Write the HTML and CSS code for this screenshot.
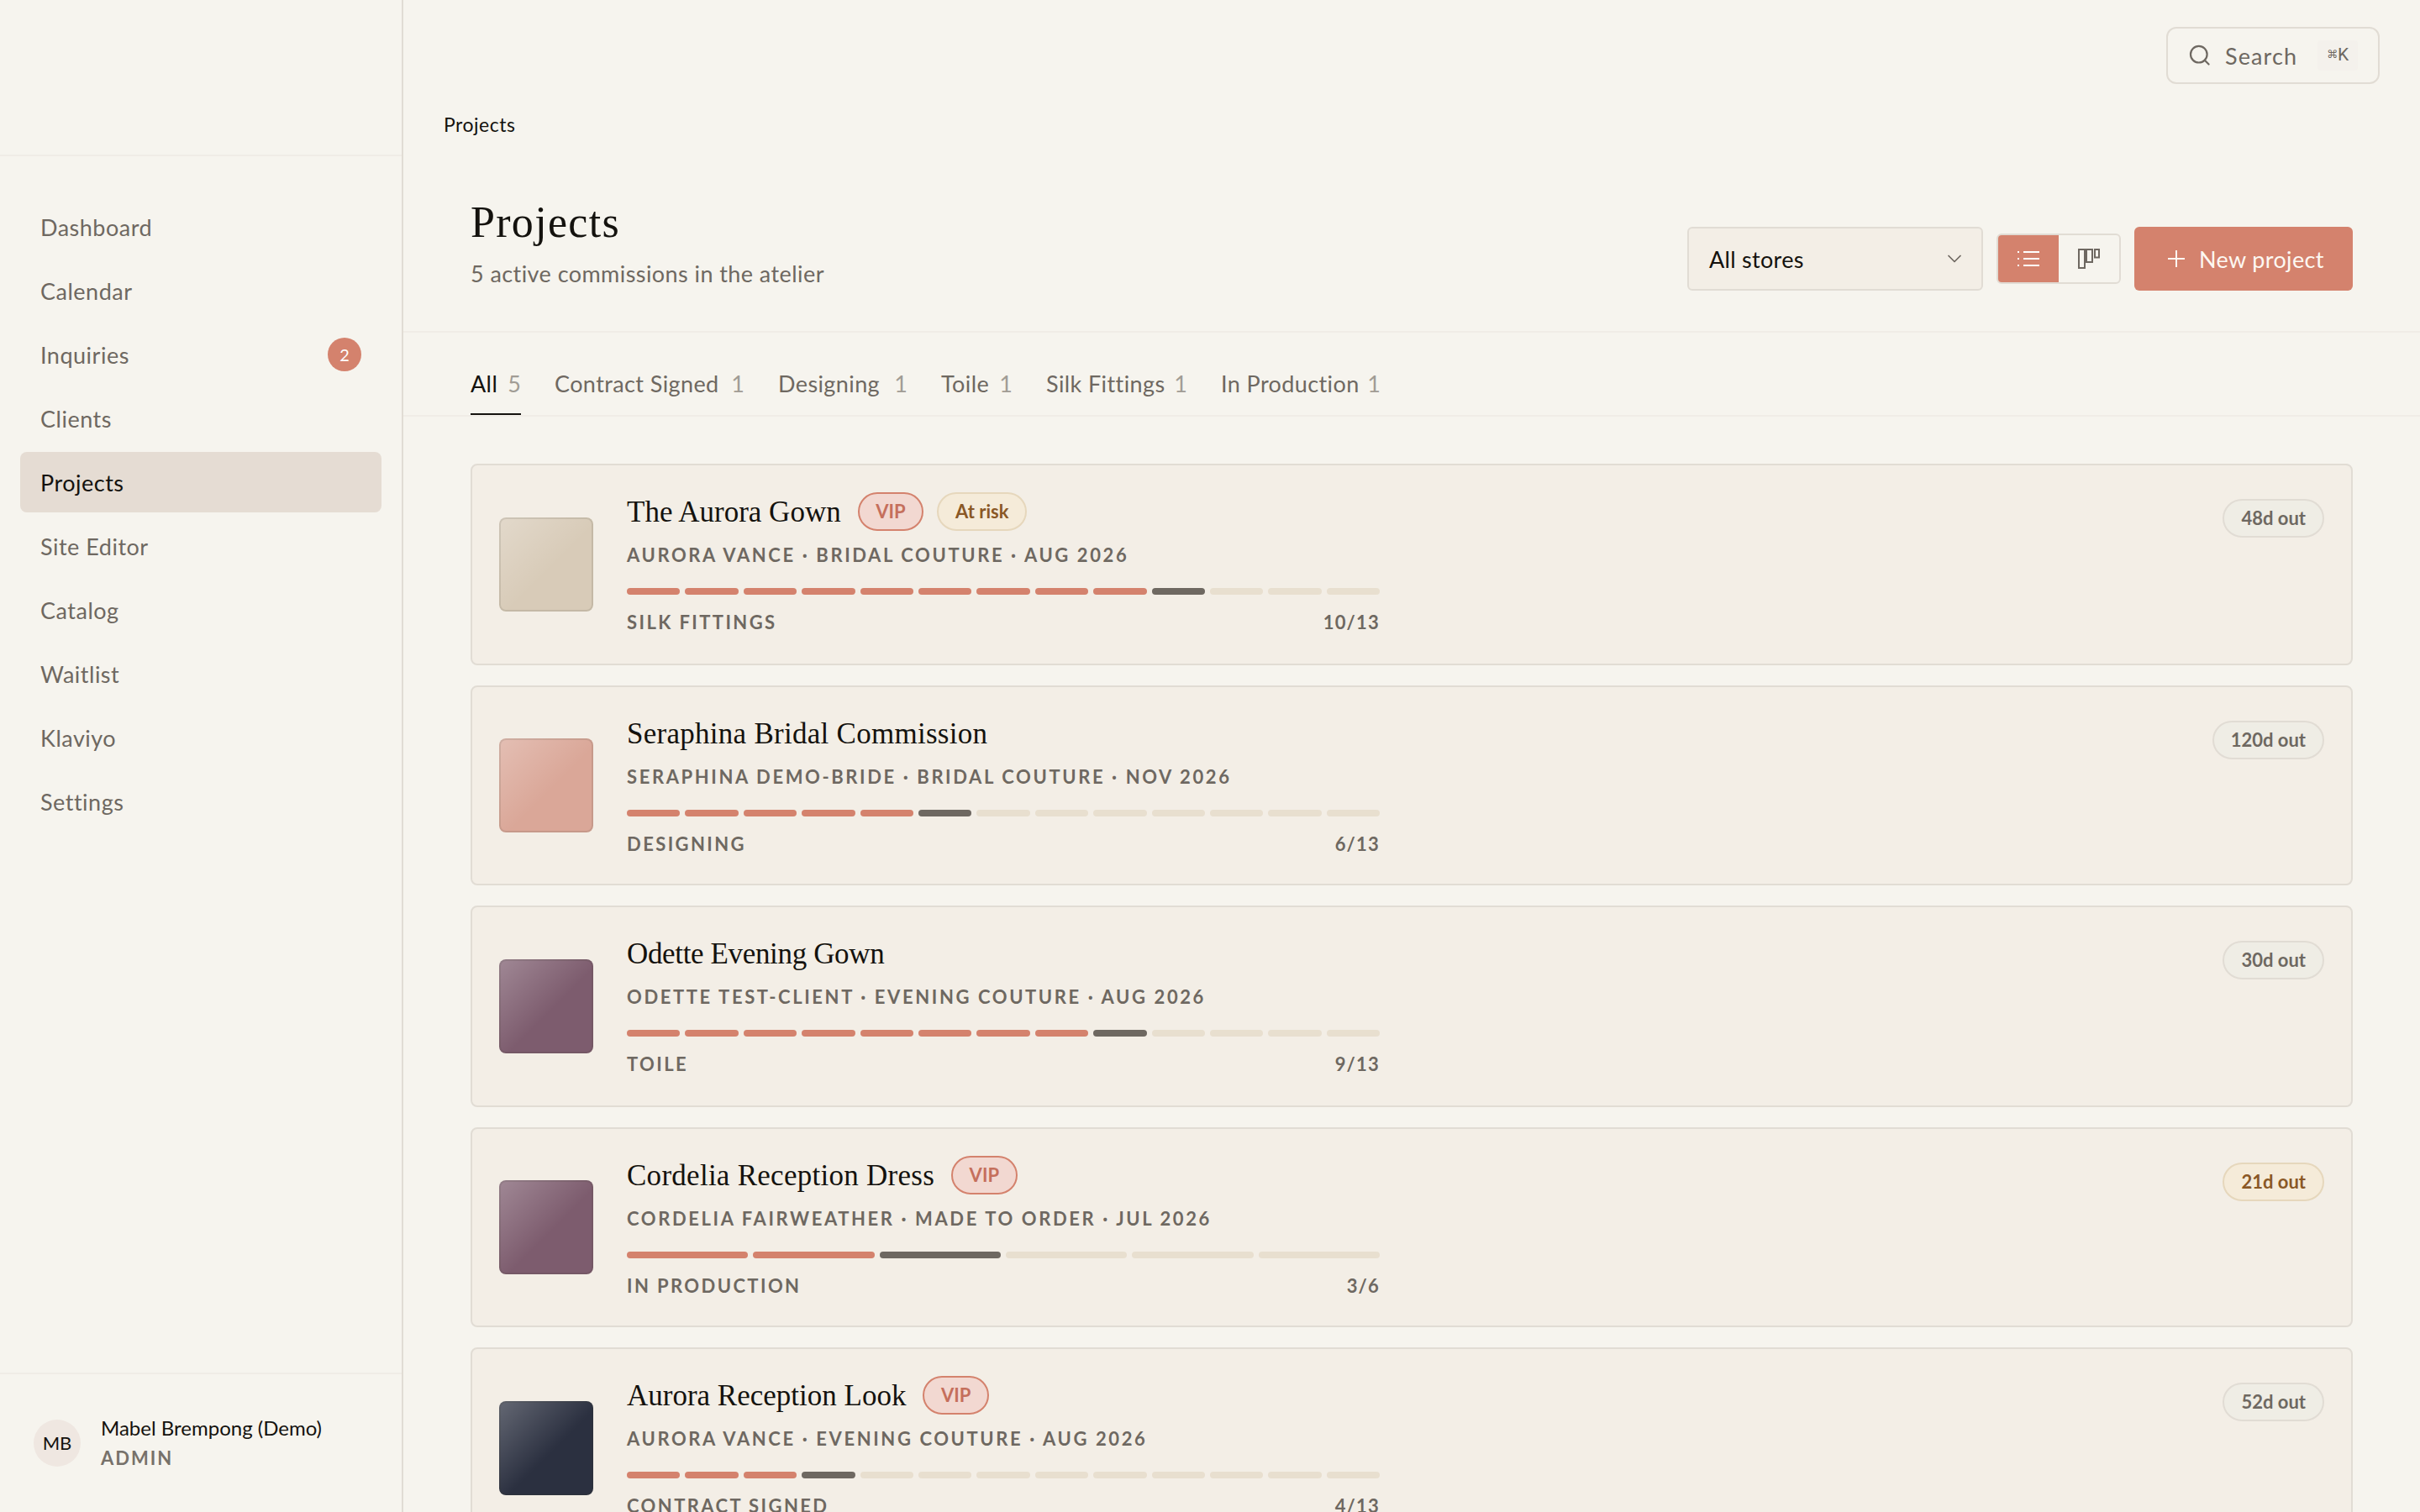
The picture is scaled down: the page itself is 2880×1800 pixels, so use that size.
FILE: index.html
```
<!DOCTYPE html>
<html lang="en">
<head>
  <meta charset="UTF-8" />
  <meta name="viewport" content="width=device-width, initial-scale=1.0"/>
  <title>Projects</title>
  <link rel="stylesheet" href="styles.css">
</head>
<body>
  <aside class="sidebar">
    <div class="brand"></div>
    <nav class="nav">
      <a class="nav-item">Dashboard</a>
      <a class="nav-item">Calendar</a>
      <a class="nav-item">Inquiries <span class="nav-count">2</span></a>
      <a class="nav-item">Clients</a>
      <a class="nav-item active">Projects</a>
      <a class="nav-item">Site Editor</a>
      <a class="nav-item">Catalog</a>
      <a class="nav-item">Waitlist</a>
      <a class="nav-item">Klaviyo</a>
      <a class="nav-item">Settings</a>
    </nav>
    <div class="user">
      <div class="avatar">MB</div>
      <div class="user-info">
        <div class="user-name">Mabel Brempong (Demo)</div>
        <div class="user-role">ADMIN</div>
      </div>
    </div>
  </aside>

  <main class="main">
    <div class="topbar">
      <button type="button" class="search">
        <svg width="28" height="28" viewBox="0 0 28 28" fill="none" stroke="currentColor" stroke-width="2.2" stroke-linecap="round">
          <circle cx="12.8" cy="12.7" r="9.8"/>
          <path d="M19.8 19.7l4.8 4.8"/>
        </svg>
        <span class="search-label">Search</span>
        <kbd><span class="cmd">⌘</span>K</kbd>
      </button>
    </div>
    <div class="breadcrumb">Projects</div>

    <header class="page-header">
      <div>
        <h1>Projects</h1>
        <p class="lead">5 active commissions in the atelier</p>
      </div>
      <div class="controls">
        <div class="select">
          All stores
          <svg width="28" height="28" viewBox="0 0 24 24" fill="none" stroke="currentColor" stroke-width="1.5" stroke-linecap="round" stroke-linejoin="round">
            <path d="M6 9l6 6 6-6"/>
          </svg>
        </div>
        <div class="toggle">
          <button type="button" class="on" aria-label="List view">
            <svg width="28" height="28" viewBox="0 0 28 28" fill="none" stroke="currentColor" stroke-width="2">
              <path d="M8 6h19M8 14h19M8 22h19M1 6h2M1 14h2M1 22h2"/>
            </svg>
          </button>
          <button type="button" aria-label="Board view">
            <svg width="28" height="28" viewBox="0 0 28 28" fill="none" stroke="currentColor" stroke-width="2">
              <rect x="2" y="3" width="7" height="22"/>
              <rect x="11" y="3" width="7" height="15"/>
              <rect x="21" y="3" width="5" height="9.5"/>
            </svg>
          </button>
        </div>
        <button type="button" class="new-btn">
          <svg width="28" height="28" viewBox="0 0 28 28" fill="none" stroke="currentColor" stroke-width="2">
            <path d="M4 14h20M14 4v20"/>
          </svg>
          New project
        </button>
      </div>
    </header>

    <nav class="tabs">
      <a class="tab active">All <span>5</span></a>
      <a class="tab">Contract Signed <span>1</span></a>
      <a class="tab">Designing <span>1</span></a>
      <a class="tab">Toile <span>1</span></a>
      <a class="tab">Silk Fittings <span>1</span></a>
      <a class="tab">In Production <span>1</span></a>
    </nav>

    <section class="list">
      <article class="card">
        <div class="swatch cream"></div>
        <div class="card-body">
          <div class="title-row">
            <h2>The Aurora Gown</h2>
            <span class="badge vip">VIP</span>
            <span class="badge warn">At risk</span>
          </div>
          <div class="meta">AURORA VANCE · BRIDAL COUTURE · AUG 2026</div>
          <div class="progress" data-step="10" data-total="13"></div>
          <div class="stage"><span>SILK FITTINGS</span><span class="step">10/13</span></div>
        </div>
        <span class="badge due">48d out</span>
      </article>

      <article class="card">
        <div class="swatch blush"></div>
        <div class="card-body">
          <div class="title-row">
            <h2 class="loose">Seraphina Bridal Commission</h2>
          </div>
          <div class="meta">SERAPHINA DEMO-BRIDE · BRIDAL COUTURE · NOV 2026</div>
          <div class="progress" data-step="6" data-total="13"></div>
          <div class="stage"><span>DESIGNING</span><span class="step">6/13</span></div>
        </div>
        <span class="badge due">120d out</span>
      </article>

      <article class="card">
        <div class="swatch plum"></div>
        <div class="card-body">
          <div class="title-row">
            <h2 class="tight">Odette Evening Gown</h2>
          </div>
          <div class="meta">ODETTE TEST-CLIENT · EVENING COUTURE · AUG 2026</div>
          <div class="progress" data-step="9" data-total="13"></div>
          <div class="stage"><span>TOILE</span><span class="step">9/13</span></div>
        </div>
        <span class="badge due">30d out</span>
      </article>

      <article class="card">
        <div class="swatch plum"></div>
        <div class="card-body">
          <div class="title-row">
            <h2 class="loose">Cordelia Reception Dress</h2>
            <span class="badge vip">VIP</span>
          </div>
          <div class="meta">CORDELIA FAIRWEATHER · MADE TO ORDER · JUL 2026</div>
          <div class="progress" data-step="3" data-total="6"></div>
          <div class="stage"><span>IN PRODUCTION</span><span class="step">3/6</span></div>
        </div>
        <span class="badge due warn">21d out</span>
      </article>

      <article class="card">
        <div class="swatch navy"></div>
        <div class="card-body">
          <div class="title-row">
            <h2>Aurora Reception Look</h2>
            <span class="badge vip">VIP</span>
          </div>
          <div class="meta">AURORA VANCE · EVENING COUTURE · AUG 2026</div>
          <div class="progress" data-step="4" data-total="13"></div>
          <div class="stage"><span>CONTRACT SIGNED</span><span class="step">4/13</span></div>
        </div>
        <span class="badge due">52d out</span>
      </article>
    </section>
  </main>

  <script>
    // one segment per stage: finished, current, still to come
    document.querySelectorAll('.progress').forEach(bar => {
      const step = parseInt(bar.dataset.step);
      const total = parseInt(bar.dataset.total);
      for (let i = 1; i <= total; i++) {
        const seg = document.createElement('i');
        if (i < step) seg.className = 'done';
        if (i === step) seg.className = 'current';
        bar.appendChild(seg);
      }
    });
  </script>
</body>
</html>
```
FILE: styles.css
```
* {
  box-sizing: border-box;
}

body {
  margin: 0;
  height: 1800px;
  display: flex;
  overflow: hidden;
  background: #f6f4ee;
  color: #14120e;
  font-family: Lato, "Liberation Sans", sans-serif;
  font-size: 27px;
  font-variant-ligatures: none;
}

h1, h2, p {
  margin: 0;
  font-weight: 400;
}

button {
  font: inherit;
  letter-spacing: inherit;
  color: inherit;
  border: none;
  background: none;
  padding: 0;
}

svg {
  display: block;
  flex: none;
}

/* sidebar */
.sidebar {
  width: 480px;
  flex: none;
  display: flex;
  flex-direction: column;
  border-right: 2px solid #e1dcd4;
}

.brand {
  height: 186px;
  border-bottom: 2px solid #f0ece6;
}

.nav {
  flex: 1;
  padding: 48px 24px;
  display: flex;
  flex-direction: column;
  gap: 4px;
}

.nav-item {
  height: 72px;
  padding: 0 24px;
  display: flex;
  align-items: center;
  justify-content: space-between;
  border-radius: 8px;
  color: #6e6861;
  letter-spacing: 0.5px;
}

.nav-item.active {
  background: #e5dcd3;
  color: #14120e;
}

.nav-count {
  width: 40px;
  height: 40px;
  border-radius: 50%;
  background: #d4826d;
  color: #fff;
  font-size: 20px;
  line-height: 41px;
  text-align: center;
  letter-spacing: 0;
}

.user {
  height: 166px;
  padding: 0 40px;
  display: flex;
  align-items: center;
  gap: 24px;
  border-top: 2px solid #f0ece6;
}

.avatar {
  width: 56px;
  height: 56px;
  border-radius: 50%;
  background: #efe7e1;
  font-size: 22px;
  line-height: 56px;
  text-align: center;
}

.user-info {
  padding-bottom: 2px;
}

.user-name {
  font-size: 24px;
  line-height: 34px;
}

.user-role {
  margin-top: 4px;
  font-size: 22px;
  font-weight: 700;
  line-height: 30px;
  letter-spacing: 2px;
  color: #77716a;
}

/* top area */
.main {
  flex: 1;
  min-width: 0;
  height: 1800px;
  overflow: hidden;
}

.topbar {
  height: 132px;
  padding: 32px 48px 0;
  display: flex;
  justify-content: flex-end;
}

.search {
  width: 254px;
  height: 68px;
  padding: 0 24px;
  display: flex;
  align-items: center;
  border: 2px solid #e1dcd4;
  border-radius: 12px;
  color: #6e6861;
}

.search-label {
  margin-left: 16px;
  letter-spacing: 1.1px;
}

kbd {
  width: 48px;
  height: 36px;
  margin-left: auto;
  padding-bottom: 2px;
  display: flex;
  align-items: center;
  justify-content: center;
  border-radius: 4px;
  background: #f4f1ec;
  font-family: Roboto, "Liberation Sans", sans-serif;
  font-size: 21px;
  line-height: 34px;
}

.cmd {
  font-family: "DejaVu Sans", sans-serif;
  font-size: 13px;
}

.breadcrumb {
  height: 32px;
  padding-left: 48px;
  font-size: 23px;
  line-height: 32px;
  letter-spacing: 0.5px;
}

.page-header {
  height: 232px;
  padding: 0 80px 48px;
  display: flex;
  justify-content: space-between;
  align-items: flex-end;
  border-bottom: 2px solid #f0ece6;
}

h1 {
  font-family: "Liberation Serif", serif;
  font-size: 52px;
  line-height: 60px;
  letter-spacing: 1.3px;
}

.lead {
  margin-top: 11px;
  line-height: 40px;
  letter-spacing: 0.43px;
  color: #6e6861;
}

.controls {
  display: flex;
  align-items: center;
  gap: 16px;
}

.select {
  width: 352px;
  height: 76px;
  padding: 0 18px 0 24px;
  display: flex;
  align-items: center;
  justify-content: space-between;
  border: 2px solid #e1dcd4;
  border-radius: 6px;
  background: #f3eee6;
  letter-spacing: 0.3px;
}

.select svg {
  color: #6e6861;
}

.toggle {
  display: flex;
  border: 2px solid #e1dcd4;
  border-radius: 6px;
  overflow: hidden;
  color: #6e6861;
}

.toggle button {
  width: 72px;
  height: 56px;
  display: flex;
  align-items: center;
  justify-content: center;
}

.toggle .on {
  background: #d4826d;
  color: #fff;
}

.new-btn {
  width: 260px;
  height: 76px;
  padding-left: 36px;
  display: flex;
  align-items: center;
  gap: 13px;
  border-radius: 6px;
  background: #d4826d;
  color: #fdf8f2;
  letter-spacing: 0.35px;
}

/* tabs */
.tabs {
  height: 100px;
  padding: 43px 80px 0;
  display: grid;
  grid-template-columns: 60px 226px 154px 85px 168px 190px;
  column-gap: 40px;
  border-bottom: 2px solid #f0ece6;
}

.tab {
  display: flex;
  justify-content: space-between;
  line-height: 36px;
  white-space: nowrap;
  border-bottom: 2px solid transparent;
  letter-spacing: 0.4px;
  color: #6e6861;
}

.tab span {
  color: #a19c95;
  letter-spacing: 0;
}

.tab.active {
  color: #14120e;
  border-bottom-color: #14120e;
}

/* project cards */
.list {
  padding: 56px 80px;
  display: flex;
  flex-direction: column;
  gap: 24px;
}

.card {
  height: 238px;
  flex: none;
  padding: 0 32px;
  display: flex;
  align-items: center;
  border: 2px solid #e1dcd4;
  border-radius: 8px;
  background: #f3eee6;
}

.card:nth-child(odd) {
  height: 240px;
}

.swatch {
  width: 112px;
  height: 112px;
  margin-right: 40px;
  border-radius: 8px;
  background-image: linear-gradient(135deg, rgba(255, 255, 255, 0.27), rgba(255, 255, 255, 0) 55%);
  box-shadow: inset 0 0 0 2px rgba(60, 55, 45, 0.12);
}

.cream { background-color: #d8cbb8; }
.blush { background-color: #daa798; }
.plum { background-color: #7d5c6e; }
.navy { background-color: #2b3040; }

.card-body {
  width: 896px;
  align-self: flex-start;
  padding-top: 32px;
}

.title-row {
  height: 46px;
  display: flex;
  align-items: center;
}

h2 {
  margin-right: 4px;
  padding-top: 2px;
  font-family: "Liberation Serif", serif;
  font-size: 35px;
  line-height: 44px;
}

h2.loose { letter-spacing: 0.27px; }
h2.tight { letter-spacing: -0.35px; }

.badge {
  height: 46px;
  padding: 0 20px;
  margin-left: 16px;
  border: 2px solid #e1dcd4;
  border-radius: 23px;
  font-size: 22px;
  font-weight: 700;
  line-height: 42px;
  white-space: nowrap;
}

.vip {
  padding: 0 19.5px;
  background: #f2d8d1;
  border-color: #d4826d;
  color: #c56f5c;
}

.due {
  align-self: flex-start;
  margin-top: 40px;
  margin-left: auto;
  background: #efede5;
  color: #6e6861;
}

.warn {
  background: #f5ebd9;
  border-color: #e6d7bc;
  color: #8a5826;
}

.meta, .stage {
  font-size: 22px;
  font-weight: 700;
  line-height: 30px;
  letter-spacing: 2.6px;
  color: #6e6861;
}

.meta {
  margin-top: 14px;
}

.progress {
  margin-top: 24px;
  height: 8px;
  display: flex;
  gap: 6px;
}

.progress i {
  flex: 1;
  border-radius: 4px;
  background: #e8dfcf;
}

.progress .done { background: #d4826d; }
.progress .current { background: #6e6861; }

.stage {
  margin-top: 18px;
  display: flex;
  justify-content: space-between;
  letter-spacing: 2.4px;
}

.step {
  letter-spacing: 1.2px;
}
```
